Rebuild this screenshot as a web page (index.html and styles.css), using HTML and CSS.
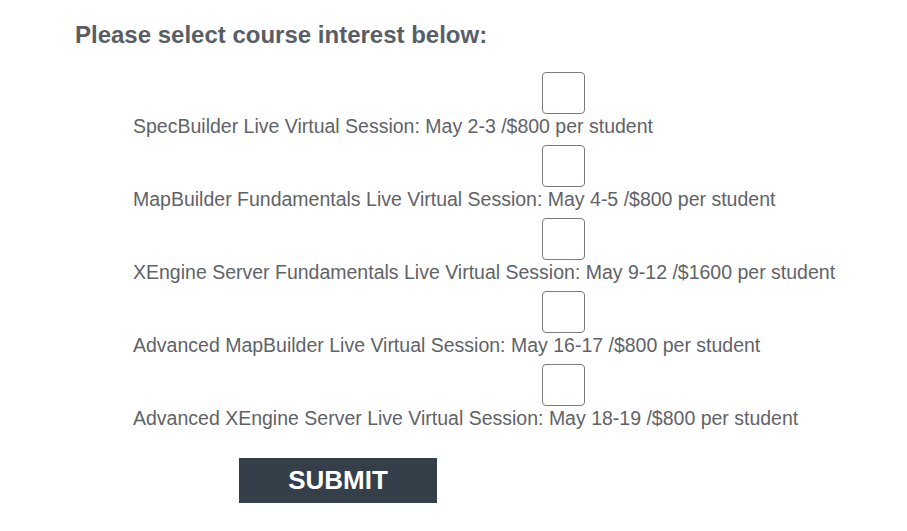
FILE: index.html
```html
<!DOCTYPE html>
<html>
<head>
<meta charset="utf-8">
<link rel="stylesheet" href="styles.css">
</head>
<body>
<form class="course-form">
  <h2 class="title">Please select course interest below:</h2>
  <div class="options">
    <label class="option">
      <input type="checkbox" class="box">
      <span class="text">SpecBuilder Live Virtual Session: May 2-3 /$800 per student</span>
    </label>
    <label class="option">
      <input type="checkbox" class="box">
      <span class="text">MapBuilder Fundamentals Live Virtual Session: May 4-5 /$800 per student</span>
    </label>
    <label class="option">
      <input type="checkbox" class="box">
      <span class="text">XEngine Server Fundamentals Live Virtual Session: May 9-12 /$1600 per student</span>
    </label>
    <label class="option">
      <input type="checkbox" class="box">
      <span class="text">Advanced MapBuilder Live Virtual Session: May 16-17 /$800 per student</span>
    </label>
    <label class="option">
      <input type="checkbox" class="box">
      <span class="text">Advanced XEngine Server Live Virtual Session: May 18-19 /$800 per student</span>
    </label>
  </div>
  <button type="button" class="submit">SUBMIT</button>
</form>
</body>
</html>
```
FILE: styles.css
```css
html, body {
  margin: 0;
  padding: 0;
  background: #ffffff;
}
body {
  font-family: "Liberation Sans", Arial, sans-serif;
  color: #5f6368;
}
.course-form {
  padding: 20px 0 0 75px;
}
.title {
  margin: 0;
  font-size: 24px;
  line-height: 30px;
  font-weight: bold;
  color: #585e66;
}
.options {
  display: flex;
  flex-direction: column;
  gap: 7px;
  padding-left: 58px;
  margin-top: 22px;
}
.option {
  display: flex;
  flex-direction: column;
  align-items: flex-start;
}
.box {
  appearance: none;
  -webkit-appearance: none;
  display: block;
  margin: 0 0 0 409px;
  width: 43px;
  height: 42px;
  border: 1px solid #7a7a7a;
  border-radius: 4px;
  background: #fff;
  box-sizing: border-box;
}
.text {
  font-size: 19.5px;
  line-height: 24px;
  color: #5f6368;
}
.submit {
  display: block;
  margin: 28px 0 0 164px;
  width: 198px;
  height: 45px;
  border: none;
  background: #343f49;
  color: #ffffff;
  font-family: "Liberation Sans", Arial, sans-serif;
  font-weight: bold;
  font-size: 26px;
  padding: 0;
}
```
